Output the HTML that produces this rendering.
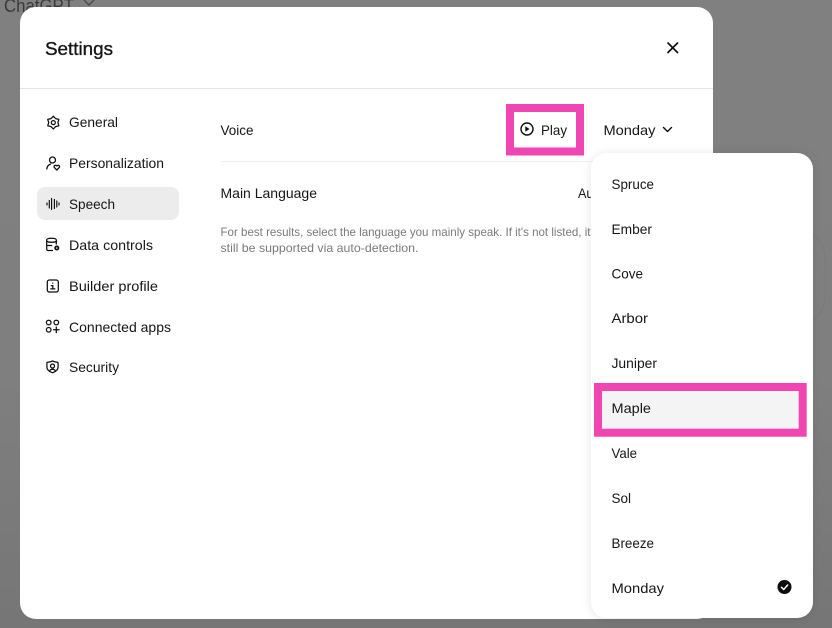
<!DOCTYPE html>
<html lang="en">
<head>
<meta charset="utf-8">
<title>Settings</title>
<style>
html,body{margin:0;padding:0;width:832px;height:628px;overflow:hidden;background:#808080}
svg{display:block}
text{font-family:"Liberation Sans",sans-serif;font-size:14px;fill:#161616}
.c{font-size:12px;fill:#7a7a7a}
.i{fill:none;stroke:#0d0d0d;stroke-width:1.25;stroke-linecap:round;stroke-linejoin:round}
</style>
</head>
<body>
<svg width="832" height="628" viewBox="0 0 832 628" xmlns="http://www.w3.org/2000/svg">
<defs>
<linearGradient id="bg" x1="0" y1="0" x2="0" y2="1">
<stop offset="0" stop-color="#808080"/>
<stop offset=".6" stop-color="#7f7f7f"/>
<stop offset="1" stop-color="#767676"/>
</linearGradient>
<filter id="sh" x="-20%" y="-10%" width="140%" height="120%">
<feDropShadow dx="0" dy="1" stdDeviation="5" flood-color="#000" flood-opacity=".1"/>
</filter>
</defs>
<rect width="832" height="628" fill="url(#bg)"/>
<rect x="640" y="228" width="185" height="98" rx="30" fill="none" stroke="#7a7a7a" stroke-width="1"/>
<text x="4" y="12" style="font-size:18px;fill:#3a3a3a" textLength="70" lengthAdjust="spacingAndGlyphs">ChatGPT</text>
<path d="M84 0l5 5 5-5" fill="none" stroke="#4a4a4a" stroke-width="1.4"/>

<rect x="20" y="7" width="693" height="612" rx="16" fill="#fff"/>
<text x="45" y="55" style="font-size:18px;stroke:#161616;stroke-width:.35" textLength="68" lengthAdjust="spacingAndGlyphs">Settings</text>
<path d="M668 43l9.500 9.500M677.500 43L668 52.500" fill="none" stroke="#0d0d0d" stroke-width="1.700" stroke-linecap="round"/>
<rect x="20" y="88" width="693" height="1" fill="#e5e5e5"/>

<rect x="37" y="187" width="142" height="33" rx="8" fill="#ececec"/>

<!-- General: gear -->
<path class="i" d="M53.300 116.200L55.600 118.620 58.840 119.400 57.900 122.600 58.840 125.800 55.600 126.580 53.300 129 51 126.580 47.760 125.800 48.700 122.600 47.760 119.400 51 118.620Z"/>
<circle class="i" cx="53.300" cy="122.600" r="2"/>

<!-- Personalization -->
<circle class="i" cx="52.500" cy="160" r="3"/>
<path class="i" d="M46.800 169c.3-2.500 1.700-4.300 3.800-4.900"/>
<path class="i" d="M56.800 170l-2.400-2.400c-1.300-1.500.9-3.100 2.400-1.700 1.500-1.400 3.700.2 2.400 1.700z"/>

<!-- Speech -->
<path class="i" d="M47 203v2M49.300 200.500v7.500M51.600 198.500v11M54.400 199.500v9M56.800 201v6M59 203v2" style="stroke-width:1.150"/>

<!-- Data controls -->
<path class="i" d="M52.500 250.500h-4.300a1.500 1.500 0 0 1-1.500-1.500v-9c0-1.200 2-1.800 4.800-1.800s4.800.6 4.800 1.800v4M46.700 241c1 1 2.800 1.300 5.100 1.300s3.800-.3 4.800-1.300M46.700 245.500h5"/>
<circle cx="56.800" cy="248" r="2.500" fill="#0d0d0d"/>
<circle cx="56.800" cy="248" r=".8" fill="#fff"/>

<!-- Builder profile -->
<rect class="i" x="47.300" y="280" width="11" height="12" rx="2"/>
<path class="i" d="M52.800 283.200v.1M51.300 285.600h1.500v3.300M50.800 288.900h4"/>

<!-- Connected apps -->
<circle class="i" cx="48.700" cy="322.500" r="2.300"/>
<circle class="i" cx="56.300" cy="322.500" r="2.300"/>
<circle class="i" cx="48.700" cy="329.800" r="2.300"/>
<path class="i" d="M56.300 327v5.600M53.500 329.800h5.600"/>

<!-- Security -->
<path class="i" d="M52.500 361l2.500.9 2.400.3a.8.8 0 0 1 .7.8v4c0 3-2.200 4.600-5.600 5.800-3.400-1.200-5.600-2.800-5.600-5.800v-4a.8.8 0 0 1 .7-.8l2.400-.3z"/>
<circle class="i" cx="52.500" cy="366" r="2"/>
<path class="i" d="M49.400 371.300c.6-1.400 1.800-2 3.100-2s2.500.6 3.100 2"/>

<text x="69" y="127" textLength="49" lengthAdjust="spacingAndGlyphs">General</text>
<text x="69" y="168" textLength="95" lengthAdjust="spacingAndGlyphs">Personalization</text>
<text x="69" y="209" textLength="46" lengthAdjust="spacingAndGlyphs">Speech</text>
<text x="69" y="250" textLength="84" lengthAdjust="spacingAndGlyphs">Data controls</text>
<text x="69" y="291" textLength="89" lengthAdjust="spacingAndGlyphs">Builder profile</text>
<text x="69" y="332" textLength="102" lengthAdjust="spacingAndGlyphs">Connected apps</text>
<text x="69" y="372" textLength="50" lengthAdjust="spacingAndGlyphs">Security</text>

<!-- content -->
<text x="220.500" y="135" textLength="33" lengthAdjust="spacingAndGlyphs">Voice</text>
<rect x="221" y="161" width="474" height="1" fill="#f0f0f0"/>
<rect x="510" y="108" width="70" height="43.500" fill="#fff" stroke="#f046b4" stroke-width="8"/>
<circle cx="527" cy="129" r="6" fill="none" stroke="#0d0d0d" stroke-width="1.400"/>
<path d="M525.300 126.300l4.200 2.700-4.200 2.700z" fill="#0d0d0d"/>
<text x="541" y="135" textLength="26" lengthAdjust="spacingAndGlyphs">Play</text>
<rect x="586" y="104" width="1" height="50" fill="#f4f4f4"/>
<text x="603.500" y="135" textLength="52" lengthAdjust="spacingAndGlyphs">Monday</text>
<path d="M663.500 127.500l4 4 4-4" fill="none" stroke="#0d0d0d" stroke-width="1.400" stroke-linecap="round" stroke-linejoin="round"/>

<text x="220.500" y="198" textLength="96.500" lengthAdjust="spacingAndGlyphs">Main Language</text>
<text x="578" y="198" textLength="26" lengthAdjust="spacingAndGlyphs">Auto</text>
<text class="c" x="220.500" y="236" textLength="395" lengthAdjust="spacingAndGlyphs">For best results, select the language you mainly speak. If it's not listed, it may</text>
<text class="c" x="220.500" y="252" textLength="198" lengthAdjust="spacingAndGlyphs">still be supported via auto-detection.</text>

<!-- dropdown -->
<rect x="591" y="153" width="222" height="465" rx="16" fill="#fff" filter="url(#sh)"/>
<rect x="598" y="387" width="204.700" height="45.700" fill="#f4f4f4" stroke="#f046b4" stroke-width="8"/>
<text x="611.500" y="189" textLength="42.500" lengthAdjust="spacingAndGlyphs">Spruce</text>
<text x="611.500" y="234" textLength="40.500" lengthAdjust="spacingAndGlyphs">Ember</text>
<text x="611.500" y="278.500" textLength="31.500" lengthAdjust="spacingAndGlyphs">Cove</text>
<text x="611.500" y="323" textLength="36.500" lengthAdjust="spacingAndGlyphs">Arbor</text>
<text x="611.500" y="368" textLength="45.500" lengthAdjust="spacingAndGlyphs">Juniper</text>
<text x="611.500" y="413" textLength="39.500" lengthAdjust="spacingAndGlyphs">Maple</text>
<text x="611.500" y="458" textLength="25.500" lengthAdjust="spacingAndGlyphs">Vale</text>
<text x="611.500" y="503" textLength="19.500" lengthAdjust="spacingAndGlyphs">Sol</text>
<text x="611.500" y="548" textLength="42.500" lengthAdjust="spacingAndGlyphs">Breeze</text>
<text x="611.500" y="593" textLength="52.500" lengthAdjust="spacingAndGlyphs">Monday</text>
<circle cx="784.500" cy="587" r="7" fill="#0d0d0d"/>
<path d="M781.500 587.300l2.200 2.200 4-4.500" fill="none" stroke="#fff" stroke-width="1.500" stroke-linecap="round" stroke-linejoin="round"/>
</svg>
</body>
</html>
